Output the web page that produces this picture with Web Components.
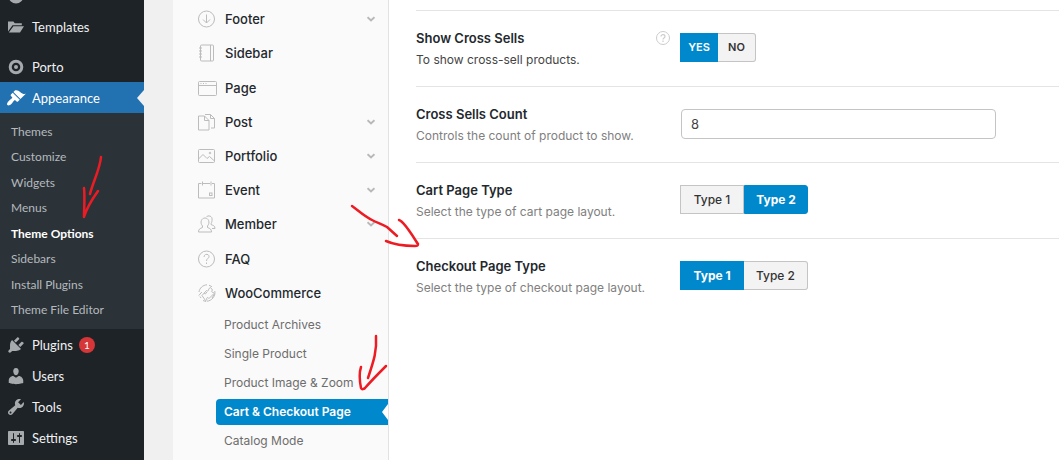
<!DOCTYPE html>
<html lang="en">
<head>
<meta charset="utf-8">
<title>Theme Options</title>
<style>
html, body { margin: 0; height: 100%; }
body { overflow: hidden; font-family: Inter, "Open Sans", sans-serif; background: #f0f0f1; }
</style>
</head>
<body>
<theme-options-page></theme-options-page>
<script>
const ICONS = {
  round: '<circle cx="10" cy="10" r="7.5"/>',
  templates: '<path d="M2 4.6h5.4l1.4 1.7h7v2H6.5L2 14.6zM7.4 9.2H18l-4 6.3H2.8z"/>',
  porto: '<circle cx="10" cy="10" r="5.8" fill="none" stroke="currentColor" stroke-width="3"/><circle cx="10" cy="10" r="2"/>',
  appearance: '<path d="M14.48 11.06L7.41 3.99l1.5-1.5c.5-.56 2.3-.47 3.51.32 1.21.8 1.43 1.28 2.91 2.1 1.18.64 2.45 1.26 4.45.85zm-.71.71L6.7 4.7 4.93 6.47c-.39.39-.39 1.02 0 1.41l1.06 1.06c.39.39.39 1.03 0 1.42-.6.6-1.43 1.11-2.21 1.69-.35.26-.7.53-1.01.84C1.43 14.23.4 16.08 1.4 17.07c.99 1 2.84-.03 4.18-1.36.31-.31.58-.66.85-1.02.57-.78 1.08-1.61 1.69-2.21.39-.39 1.02-.39 1.41 0l1.06 1.06c.39.39 1.02.39 1.41 0z"/>',
  plugins: '<path d="M13.11 4.36L9.87 7.6 8 5.73l3.24-3.24c.35-.34 1.05-.2 1.56.32.52.51.66 1.21.31 1.55zm-8 1.77l.91-1.12 9.01 9.01-1.19.84c-.71.71-2.63 1.16-3.82 1.16H6.14L4.9 17.26c-.59.59-1.54.59-2.12 0-.59-.58-.59-1.53 0-2.12l1.24-1.24v-3.88c0-1.13.4-3.19 1.09-3.89zm7.26 3.97l3.24-3.24c.34-.35 1.04-.21 1.55.31.52.51.66 1.21.31 1.55l-3.24 3.25z"/>',
  users: '<path d="M10 9.25c-2.27 0-2.73-3.44-2.73-3.44C7 4.02 7.82 2 9.97 2c2.16 0 2.98 2.02 2.71 3.81 0 0-.41 3.44-2.68 3.44zm0 2.57L12.72 10c2.39 0 4.52 2.33 4.52 4.53v2.49s-3.65 1.13-7.24 1.13c-3.65 0-7.24-1.13-7.24-1.13v-2.49c0-2.25 1.94-4.48 4.47-4.48z"/>',
  tools: '<path fill-rule="evenodd" d="M16.68 9.77c-1.34 1.34-3.3 1.67-4.95.99l-5.41 6.52c-.99.99-2.59.99-3.58 0s-.99-2.59 0-3.57l6.52-5.42c-.68-1.65-.35-3.61.99-4.95 1.28-1.28 3.12-1.62 4.72-1.06l-2.89 2.89 2.82 2.82 2.86-2.87c.53 1.58.18 3.39-1.08 4.65zM3.81 16.21c.4.39 1.04.39 1.43 0 .4-.4.4-1.04 0-1.43-.39-.4-1.03-.4-1.43 0-.39.39-.39 1.03 0 1.43z"/>',
  settings: '<path d="M18 16V4c0-.55-.45-1-1-1H3c-.55 0-1 .45-1 1v12c0 .55.45 1 1 1h14c.55 0 1-.45 1-1zM8 11h1c.55 0 1 .45 1 1s-.45 1-1 1H8v1.5c0 .28-.22.5-.5.5s-.5-.22-.5-.5V13H6c-.55 0-1-.45-1-1s.45-1 1-1h1V5.5c0-.28.22-.5.5-.5s.5.22.5.5V11zm5-2h-1c-.55 0-1-.45-1-1s.45-1 1-1h1V5.5c0-.28.22-.5.5-.5s.5.22.5.5V7h1c.55 0 1 .45 1 1s-.45 1-1 1h-1v5.5c0 .28-.22.5-.5.5s-.5-.22-.5-.5V9z"/>'
};
const LINE_ICONS = {
  footer: '<circle cx="9.5" cy="10" r="8"/><path d="M9.5 5.5v8.5M6 10.5l3.500 3.500 3.500-3.500"/>',
  sidebar: '<rect x="3.500" y="2" width="13" height="16" rx="1"/><path d="M13.500 2v16M2 5h3M2 8h3M2 11h3M2 14h3"/>',
  page: '<rect x="1.500" y="3.500" width="18" height="14" rx="1"/><path d="M1.500 7.500h18"/><path d="M3.500 5.500h6" stroke-dasharray="1 1.500"/>',
  post: '<path d="M1.500 4h6l4.500 4.500v9.500h-10.500zM7.500 4v4.500h4.500M8 2.500h5.500l4 4v9.500h-3.500M13.500 2.500v4h4"/>',
  portfolio: '<rect x="1.500" y="3.500" width="16" height="13" rx="1"/><path d="M1.500 13l4.500-4.500 4 4 2.500-2 5 4.500"/><circle cx="13" cy="7" r=".8"/>',
  event: '<path d="M6 3.500h7M15 3.500h2.500v14.500h-16v-14.500h3M5.500 1.500v4M14 1.500v4"/><rect x="12.500" y="13" width="2.500" height="2.500"/>',
  member: '<path d="M1.500 18c0-3 1.500-3.500 4-4.500v-1.500c-3-3.500-1-8 2.500-8s5.500 4.500 2.500 8v1.500c2.500 1 4 1.500 4 4.500zM9.500 3c1-2 6.500-1.500 5.500 3.500 0 2-1 2.500-1 4 2 1 4 1 4 4h-3"/>',
  faq: '<circle cx="9.500" cy="10" r="8"/><path d="M7 8c0-3.500 5-3.500 5-.5 0 2-2.500 2-2.500 4.500M9.500 13.500v1.500"/>',
  woo: '<path d="M2 9c.5-4 4-7 8-7.200M1.800 12.500l3-3.500M17.800 8c1 5-3 10-8 10.200M4 15l-1-1.500M5 12.500l4.500-5c1 1.500 2.500 0 2-1.500l2-1.500 2 2.500c-1.500 1-.5 3 1 2.500l.5 1-5 5c-1.500-2-3-.5-2 1l-1.500 1zM12 2.200l3 1.500M7 10c1 1.500 3 .5 2.500-1M15 15l2.500-4M6 17.500l3 1"/>',
};

const define = (name, html) => customElements.define(name, class extends HTMLElement {
  constructor() { super(); this.attachShadow({ mode: 'open' }); }
  connectedCallback() {
    const t = document.createElement('template');
    t.innerHTML = typeof html === 'function' ? html(this) : html;
    this.shadowRoot.replaceChildren(t.content.cloneNode(true));
  }
});

/* Row of the dark admin menu */
define('admin-item', el => `
<style>
:host { display: block; }
a { display: flex; align-items: center; gap: 6px; height: 31px; padding-left: 6px; position: relative;
    color: #f0f0f1; text-decoration: none; font-size: 13px; line-height: 18px; }
svg { width: 20px; height: 20px; fill: currentColor; color: #a7aaad; flex: none; }
:host([current]) a { background: #2271b1; color: #fff; }
:host([current]) svg { color: #fff; }
:host([current]) a::after { content: ""; position: absolute; right: 0; top: 8px; border: 8px solid transparent; border-left: 0; border-right: 7px solid #f0f0f1; }
</style>
<a href="#"><svg viewBox="0 0 20 20" aria-hidden="true">${ICONS[el.getAttribute('icon')]}</svg><slot></slot></a>`);

define('count-badge', `
<style>
:host { display: inline-flex; align-items: center; justify-content: center; width: 16px; height: 16px;
        border-radius: 8px; background: #d63638; color: #fff; font-size: 10px; line-height: 16px; }
</style><slot></slot>`);

define('admin-menu', `
<style>
:host { display: block; background: #1d2327; font-family: Lato, "Open Sans", sans-serif; }
.cut { display: flex; flex-direction: column; justify-content: flex-end; height: 11px; overflow: hidden; }
.gap { height: 9px; }
ul { list-style: none; margin: 0; padding: 6px 0; background: #2c3338; display: grid; grid-auto-rows: 1fr; height: 204px; }
li { display: flex; align-items: center; padding-left: 11px; font-size: 12px; line-height: 18px; }
li a { color: #b4b9be; text-decoration: none; }
li a[aria-current] { color: #fff; font-weight: 700; }
</style>
<nav>
<div class="cut"><admin-item icon="round"></admin-item></div>
<admin-item icon="templates">Templates</admin-item>
<div class="gap"></div>
<admin-item icon="porto">Porto</admin-item>
<admin-item icon="appearance" current>Appearance</admin-item>
<ul>
<li><a href="#">Themes</a></li><li><a href="#">Customize</a></li><li><a href="#">Widgets</a></li><li><a href="#">Menus</a></li>
<li><a href="#" aria-current="page">Theme Options</a></li><li><a href="#">Sidebars</a></li><li><a href="#">Install Plugins</a></li><li><a href="#">Theme File Editor</a></li>
</ul>
<admin-item icon="plugins">Plugins <count-badge>1</count-badge></admin-item>
<admin-item icon="users">Users</admin-item>
<admin-item icon="tools">Tools</admin-item>
<admin-item icon="settings">Settings</admin-item>
</nav>`);

/* Section heading in the options navigation */
define('section-item', el => `
<style>
:host { display: flex; }
a { flex: 1; display: flex; align-items: center; gap: 8px; padding: 0 13px 0 24px; color: #23282d; text-decoration: none;
    font-size: 13px; font-weight: 500; line-height: 20px; }
.icon { width: 20px; height: 20px; fill: none; stroke: #bcbcbc; stroke-width: 1; flex: none; }
.label { flex: 1; }
.chev { width: 8px; height: 6px; fill: none; stroke: #b8b8b8; stroke-width: 2; }
</style>
<a href="#"><svg class="icon" viewBox="0 0 20 20" aria-hidden="true">${LINE_ICONS[el.getAttribute('icon')]}</svg>
<span class="label"><slot></slot></span>${el.hasAttribute('expandable') ? '<svg class="chev" viewBox="0 0 8 6" aria-hidden="true"><path d="M.5 1.200l3.500 3.300 3.500-3.300"/></svg>' : ''}</a>`);

define('options-nav', `
<style>
:host { display: block; background: #fafafa; border-right: 1px solid #e2e2e2; padding-top: 2px; }
.sections { display: grid; grid-auto-rows: 1fr; height: 308px; }
ul { list-style: none; margin: 2px 0 0 43px; padding: 0; display: grid; gap: 3px; }
li a { display: block; position: relative; padding: 0 8px; font-size: 12px; line-height: 26px; color: #6d6d6d; text-decoration: none; }
li a[aria-current] { background: #08c; color: #fff; font-weight: 600; border-radius: 4px 0 0 4px; }
li a[aria-current]::after { content: ""; position: absolute; right: 0; top: 5px; border: 8px solid transparent; border-left: 0; border-right: 6px solid #fff; }
</style>
<nav>
<div class="sections">
<section-item icon="footer" expandable>Footer</section-item>
<section-item icon="sidebar">Sidebar</section-item>
<section-item icon="page">Page</section-item>
<section-item icon="post" expandable>Post</section-item>
<section-item icon="portfolio" expandable>Portfolio</section-item>
<section-item icon="event" expandable>Event</section-item>
<section-item icon="member" expandable>Member</section-item>
<section-item icon="faq">FAQ</section-item>
<section-item icon="woo">WooCommerce</section-item>
</div>
<ul>
<li><a href="#">Product Archives</a></li><li><a href="#">Single Product</a></li><li><a href="#">Product Image &amp; Zoom</a></li>
<li><a href="#" aria-current="page">Cart &amp; Checkout Page</a></li><li><a href="#">Catalog Mode</a></li>
</ul>
</nav>`);

/* Joined pair of toggle buttons */
define('button-set', el => {
  const on = +el.getAttribute('selected');
  return `
<style>
:host { display: flex; }
button { font: 500 12px/27px Inter, sans-serif; height: 29px; padding: 0; width: 64px; color: #333; background: #f3f3f3;
         border: 1px solid #c4c4c4; }
:host([compact]) button { width: 38px; font-size: 11px; font-weight: 600; }
button:first-child { border-radius: 3px 0 0 3px; border-right: 0; }
button:last-child { border-radius: 0 3px 3px 0; }
button[aria-pressed=true] { background: #08c; border-color: #08c; color: #fff; font-weight: 700; }
button[aria-pressed=true] + button { border-left: 0; }
</style>${el.getAttribute('options').split(',').map((o, i) => `<button type="button" aria-pressed="${i === on}">${o}</button>`).join('')}`;
});

define('option-row', el => `
<style>
:host { display: grid; grid-template-columns: 264px minmax(0, 1fr); min-height: 75px; border-top: 1px solid #e4e4e4; }
.text { display: flex; align-items: flex-start; justify-content: space-between; padding: 16px 10px 15px 0; }
label, .title { display: block; font-size: 13px; line-height: 22px; font-weight: 600; color: #23282d; }
p { margin: 0; font-size: 12px; line-height: 22px; color: #808080; }
:host([strong]) p { color: #444; }
svg { width: 14px; height: 14px; margin-top: 4px; fill: none; stroke: #ccc; flex: none; }
.control { padding-top: 22px; }
input { box-sizing: border-box; width: 100%; max-width: 315px; height: 30px; margin: 0 1px; padding: 0 9px; border: 1px solid #c4c4c4;
        border-radius: 4px; background: #fff; color: #444; font: 13px/20px Inter, sans-serif; }
</style>
<div class="text"><div>${el.hasAttribute('value') ? '<label for="field">' + el.getAttribute('heading') + '</label>' : '<span class="title">' + el.getAttribute('heading') + '</span>'}
<p>${el.getAttribute('hint')}</p></div>
${el.hasAttribute('help') ? '<svg viewBox="0 0 14 14" aria-hidden="true"><circle cx="7" cy="7" r="6.500"/><path d="M5 5.500c0-2.500 4-2.500 4 0 0 1.500-2 1.500-2 3M7 9.500v1.500" stroke-width="1.200"/></svg>' : ''}</div>
<div class="control">${el.hasAttribute('value') ? '<input id="field" type="text" value="' + el.getAttribute('value') + '">' : '<slot></slot>'}</div>`);

define('options-panel', `
<style>
:host { display: block; background: #fff; padding-left: 27px; overflow: hidden; }
.above { height: 10px; }
.above::before { content: ""; display: block; width: 150px; margin-left: 270px; box-shadow: 0 0 8px rgba(0,0,0,.04); }
</style>
<main><div class="above"></div>
<option-row strong help heading="Show Cross Sells" hint="To show cross-sell products."><button-set compact options="YES,NO" selected="0"></button-set></option-row>
<option-row heading="Cross Sells Count" hint="Controls the count of product to show." value="8"></option-row>
<option-row heading="Cart Page Type" hint="Select the type of cart page layout."><button-set options="Type 1,Type 2" selected="1"></button-set></option-row>
<option-row heading="Checkout Page Type" hint="Select the type of checkout page layout."><button-set options="Type 1,Type 2" selected="0"></button-set></option-row>
</main>`);

/* Hand-drawn arrows lying over the page */
define('red-arrows', `
<style>
:host { position: absolute; left: 0; top: 0; pointer-events: none; }
svg { display: block; fill: none; stroke: #ed1c24; stroke-width: 2.5; stroke-linecap: round; stroke-linejoin: round; }
</style>
<svg width="440" height="400" viewBox="0 0 440 400" aria-hidden="true">
<path d="M101 157c-1 12-8 25-11 37M84 188c1 10 0 20 0 29 3-10 9-19 14-26"/>
<path d="M352 206c7 5 12 10 20 14 6 3 10 4 15 7l10 9M399 220c6 2 16 20 19 24 0 2-1 2-3 2-12 0-20-1-29-5"/>
<path d="M376 336c1 15-2 24-8 42M361 367c-2 6-1 16 0 21 1 2 3 1 4 0 7-8 13-14 21-22"/>
</svg>`);

define('theme-options-page', `
<style>
:host { display: grid; grid-template-columns: 144px 29px 216px minmax(0, 1fr); position: relative; min-height: 100vh; }
options-nav { grid-column: 3; }
</style>
<admin-menu></admin-menu><options-nav></options-nav><options-panel></options-panel><red-arrows></red-arrows>`);
</script>
</body>
</html>
